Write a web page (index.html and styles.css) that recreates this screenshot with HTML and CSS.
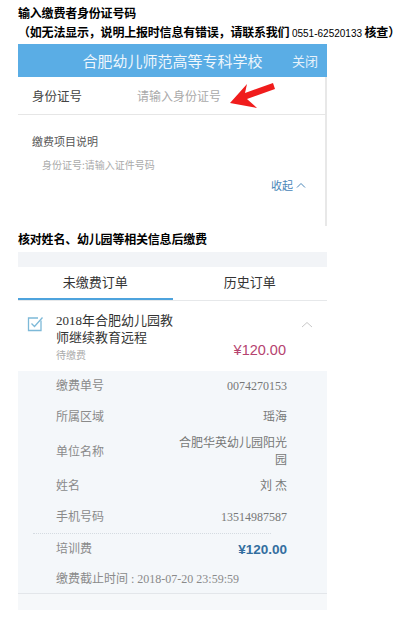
FILE: index.html
```html
<!DOCTYPE html>
<html lang="zh-CN">
<head>
<meta charset="utf-8">
<title>缴费</title>
<link rel="stylesheet" href="styles.css">
</head>
<body>
<div class="page">
  <h1 class="note">输入缴费者身份证号码</h1>
  <p class="note">（如无法显示，说明上报时信息有错误，请联系我们 <span class="num">0551-62520133</span> 核查）</p>

  <section class="panel1">
    <header class="bar">
      <span></span>
      <span class="bar-title">合肥幼儿师范高等专科学校</span>
      <span class="bar-close">关闭</span>
    </header>
    <div class="field">
      <span class="field-label">身份证号</span>
      <span class="field-ph">请输入身份证号</span>
      <svg class="arrow" width="54" height="32" viewBox="0 0 54 32"><polygon points="4,23 21,4 19,13 47,3 49,9 21,19 31,28" fill="#f01c1c"/></svg>
    </div>
    <div class="desc">
      <div class="desc-title">缴费项目说明</div>
      <div class="desc-sub">身份证号:请输入证件号码</div>
      <div class="desc-toggle">收起 <svg width="10" height="6" viewBox="0 0 10 6"><polyline points="1,5.5 5,1.5 9,5.5" fill="none" stroke="#4a86b8" stroke-width="1"/></svg></div>
    </div>
  </section>

  <h2 class="note note2">核对姓名、幼儿园等相关信息后缴费</h2>

  <section class="panel2">
    <div class="band"></div>
    <div class="tabs">
      <div class="tab active">未缴费订单</div>
      <div class="tab">历史订单</div>
    </div>
    <div class="item">
      <svg class="check" width="18" height="18" viewBox="0 0 18 18">
        <path d="M14 5.5V15.5H1.5V3H11" fill="none" stroke="#7db9d8" stroke-width="1.3"/>
        <polyline points="4.5,8.5 7.5,11.5 15.5,2.5" fill="none" stroke="#7db9d8" stroke-width="1.3"/>
      </svg>
      <div class="item-text">
        <div class="item-title">2018年合肥幼儿园教<br>师继续教育远程</div>
        <div class="item-status">待缴费</div>
      </div>
      <div class="item-price">¥120.00</div>
      <svg class="caret" width="12" height="7" viewBox="0 0 12 7"><polyline points="1,6 6,1.5 11,6" fill="none" stroke="#c8c8c8" stroke-width="1"/></svg>
    </div>
    <div class="details">
      <div class="row"><span class="label">缴费单号</span><span class="value">0074270153</span></div>
      <div class="row"><span class="label">所属区域</span><span class="value">瑶海</span></div>
      <div class="row"><span class="label">单位名称</span><span class="value wrap">合肥华英幼儿园阳光园</span></div>
      <div class="row"><span class="label">姓名</span><span class="value">刘 杰</span></div>
      <div class="row"><span class="label">手机号码</span><span class="value">13514987587</span></div>
      <div class="dots"></div>
      <div class="row"><span class="label">培训费</span><span class="value fee">¥120.00</span></div>
      <div class="row last"><span class="label">缴费截止时间 : 2018-07-20 23:59:59</span></div>
    </div>
    <div class="foot"></div>
  </section>
</div>
</body>
</html>
```

FILE: styles.css
```css
* { box-sizing: border-box; }
html, body { margin: 0; padding: 0; background: #fff; }
body { font-family: "Noto Sans CJK SC", sans-serif; color: #333; }

.page { width: 327px; padding: 3px 0 0 18px; }

.note {
  margin: 0;
  font-size: 12px;
  line-height: 19px;
  font-weight: 700;
  color: #000;
  white-space: nowrap;
  letter-spacing: -0.2px;
}
.note .num { font-family: "Liberation Sans", sans-serif; font-weight: 400; font-size: 10px; letter-spacing: 0; }
.note2 { margin: 3px 0 4px; }

.panel1 { width: 309px; margin-top: 1px; }
.bar {
  height: 33px;
  background: #5aade5;
  display: grid;
  grid-template-columns: 35px 1fr 35px;
  align-items: center;
  color: #fff;
}
.bar-title { text-align: center; font-size: 15px; color: #eef6fc; }
.bar-close { font-size: 13px; color: #e6f2fb; }

.field, .desc { border-right: 2px solid #e8e8e8; }
.field {
  height: 38px;
  display: flex;
  align-items: center;
  padding-left: 14px;
  border-bottom: 1px solid #e6e6e6;
  position: relative;
}
.field-label { width: 105px; font-size: 12.5px; color: #444; }
.field-ph { font-size: 12px; color: #aaa; }
.arrow { position: absolute; left: 208px; top: 3px; }

.desc { padding: 17px 19px 32px 14px; }
.desc-title { font-size: 11px; line-height: 18px; color: #555; }
.desc-sub { font-size: 10px; line-height: 18px; color: #aaa; margin: 6px 0 0 10px; }
.desc-toggle {
  margin-top: 2px;
  font-size: 11px;
  line-height: 18px;
  color: #4a86b8;
  display: flex;
  justify-content: flex-end;
  align-items: center;
  gap: 3px;
}

.panel2 { width: 309px; font-family: "Liberation Serif", "Noto Sans CJK SC", serif; }
.band { height: 15px; background: #f2f4f7; }
.tabs { display: flex; border-bottom: 1px solid #e6e8ea; }
.tab {
  flex: 1;
  height: 33px;
  padding-bottom: 2px;
  border-bottom: 2px solid transparent;
  display: flex;
  align-items: center;
  justify-content: center;
  font-family: "Noto Sans CJK SC", sans-serif;
  font-size: 13px;
  color: #333;
}
.tab.active { border-bottom-color: #4ea3dd; }

.item {
  display: grid;
  grid-template-columns: 29px 1fr auto 41px;
  padding: 11px 0 7px 9px;
  height: 70px;
}
.check { margin-top: 3px; }
.item-title { font-size: 13px; line-height: 17px; color: #333; }
.item-status { font-family: "Noto Sans CJK SC", sans-serif; font-size: 10px; line-height: 18px; color: #aaa; }
.item-price {
  align-self: end;
  margin-bottom: 5px;
  font-family: "Liberation Sans", sans-serif;
  font-size: 14.5px;
  line-height: 18px;
  color: #b5436f;
}
.caret { justify-self: center; margin-top: 9px; }

.details { background: #f4f7fa; padding: 0 40px 0 38px; border-bottom: 1px solid #e3e6ea; }
.row { display: flex; justify-content: space-between; align-items: center; }
.label { font-size: 12px; line-height: 31px; color: #8a8a8a; white-space: nowrap; }
.value { font-size: 12px; line-height: 17px; padding: 2px 0; color: #777; text-align: right; }
.value.wrap { width: 110px; }
.value.fee { font-family: "Liberation Sans", sans-serif; font-size: 13.5px; font-weight: 700; color: #336e9f; }
.row.last .label { line-height: 28px; }
.dots { margin: 0 16px 0 -23px; border-top: 1px dotted #d5dbe1; }
.foot { height: 16px; background: #f6f8fa; }
```
